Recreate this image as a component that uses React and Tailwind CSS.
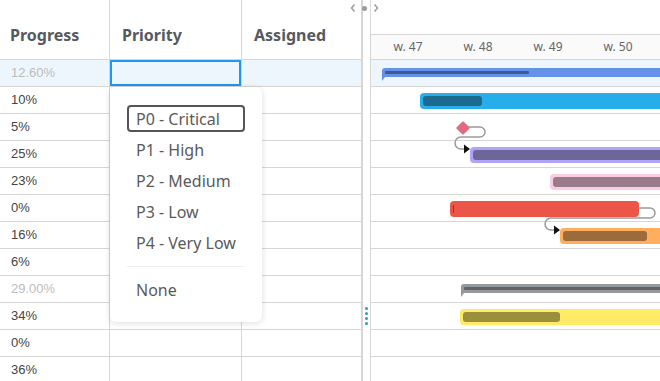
import React from 'react';

const rows = [
  { progress: '12.60%', summary: true },
  { progress: '10%' },
  { progress: '5%' },
  { progress: '25%' },
  { progress: '23%' },
  { progress: '0%' },
  { progress: '16%' },
  { progress: '6%' },
  { progress: '29.00%', summary: true },
  { progress: '34%' },
  { progress: '0%' },
  { progress: '36%' },
  { progress: '' },
];

// posição das barras em px a partir do início do gráfico
const bars = [
  { type: 'summary', left: 11, width: 400, color: '#6592e6', inner: '#3d5a98', done: 144 },
  { type: 'task', left: 49, width: 400, color: '#27aeea', inner: '#1c6a8e', done: 59 },
  { type: 'milestone', left: 87 },
  { type: 'task', left: 99, width: 400, color: '#b1a2fa', inner: '#6d6698', done: 400 },
  { type: 'task', left: 179, width: 400, color: '#fbcde5', inner: '#9a7b89', done: 400 },
  { type: 'task', left: 79, width: 189, color: '#eb5649', inner: '#a8322a', done: 0 },
  { type: 'task', left: 189, width: 400, color: '#feae5d', inner: '#9b6b3b', done: 84 },
  null,
  { type: 'summary', left: 90, width: 400, color: '#93999d', inner: '#5f6468', done: 400 },
  { type: 'task', left: 89, width: 400, color: '#ffeb66', inner: '#9b8e3c', done: 97 },
  null,
  null,
  null,
];

const prioridades = ['P0 - Critical', 'P1 - High', 'P2 - Medium', 'P3 - Low', 'P4 - Very Low'];
const semanas = ['w. 47', 'w. 48', 'w. 49', 'w. 50'];

const Bar = ({ bar }) => {
  if (!bar) return null;
  if (bar.type === 'milestone') {
    return (
      <div className="absolute top-[9px] left-[87px] w-[10px] h-[10px] rotate-45 rounded-[1px] bg-[#e06b80]"></div>
    );
  }
  if (bar.type === 'summary') {
    return (
      <div className="absolute top-[8px]" style={{ left: bar.left, width: bar.width }}>
        <div className="relative h-[9px] rounded-tl-[3px]" style={{ background: bar.color }}>
          <div
            className="absolute top-[3px] left-[3px] h-[3px] rounded-[1px]"
            style={{ width: bar.done, background: bar.inner }}
          ></div>
        </div>
        <div
          className="w-[3px] h-[4px] [clip-path:polygon(0_0,100%_0,0_100%)]"
          style={{ background: bar.color }}
        ></div>
      </div>
    );
  }
  return (
    <div
      className="absolute top-[6px] h-[16px] rounded-[4px]"
      style={{ left: bar.left, width: bar.width, background: bar.color }}
    >
      {bar.done > 0 ? (
        <div
          className="absolute top-[3px] bottom-[3px] left-[3px] rounded-[3px]"
          style={{ width: Math.min(bar.done, bar.width - 6), background: bar.inner }}
        ></div>
      ) : (
        <div className="absolute top-[4px] left-[3px] w-[1px] h-[8px] bg-[#9c2f27]"></div>
      )}
    </div>
  );
};

const App = () => {
  return (
    <div className="relative w-[660px] h-[381px] overflow-hidden bg-white flex font-['Noto_Sans',sans-serif] text-[#555]">
      {/* Grade */}
      <div className="relative w-[362px] shrink-0">
        <div className="flex h-[60px] border-b border-[#d6d6d6] text-[16px] font-bold text-[#555a60]">
          <div className="w-[110px] border-r border-[#d6d6d6] flex items-center pt-[11px] pl-[10px]">Progress</div>
          <div className="w-[132px] border-r border-[#d6d6d6] flex items-center pt-[11px] pl-[12px]">Priority</div>
          <div className="w-[120px] border-r border-[#d6d6d6] flex items-center pt-[11px] pl-[12px]">Assigned</div>
        </div>
        {rows.map((row, i) => (
          <div
            key={i}
            className={`flex h-[27px] border-b border-[#d6d6d6] ${i === 0 ? 'bg-[#eef6fd]' : ''}`}
          >
            <div
              className={`w-[110px] border-r border-[#d6d6d6] flex items-center pl-[11px] font-['Liberation_Sans',sans-serif] text-[13px] ${row.summary ? 'text-[#bcbcbc]' : 'text-[#444]'}`}
            >
              {row.progress}
            </div>
            <div className="relative w-[132px] border-r border-[#d6d6d6]">
              {i === 0 && <div className="absolute inset-0 border-2 border-[#2196f3]"></div>}
            </div>
            <div className="w-[120px] border-r border-[#d6d6d6]"></div>
          </div>
        ))}

        {/* Menu de prioridade */}
        <div className="absolute left-[110px] top-[87px] w-[152px] h-[235px] bg-white rounded-[6px] shadow-[0_1px_6px_rgba(0,0,0,0.14)] px-[17px] pt-[18px] text-[16px] text-[#5a5a5a]">
          <div className="flex flex-col gap-[4px]">
            {prioridades.map((p, i) => (
              <div
                key={p}
                className={`h-[27px] flex items-center pl-[7px] rounded-[4px] border-2 ${i === 0 ? 'border-[#555]' : 'border-transparent'}`}
              >
                {p}
              </div>
            ))}
          </div>
          <div className="mt-[10px] border-t border-[#eeeeee]"></div>
          <div className="mt-[9px] h-[27px] flex items-center pl-[9px]">None</div>
        </div>
      </div>

      {/* Divisor */}
      <div className="relative w-[8px] shrink-0 border-l border-[#d6d6d6]">
        <div className="absolute left-[2px] top-[307px] flex flex-col gap-[2px]">
          <div className="w-[3px] h-[3px] rounded-full bg-[#2a9db4]"></div>
          <div className="w-[3px] h-[3px] rounded-full bg-[#2a9db4]"></div>
          <div className="w-[3px] h-[3px] rounded-full bg-[#2a9db4]"></div>
          <div className="w-[3px] h-[3px] rounded-full bg-[#2a9db4]"></div>
        </div>
      </div>
      <div className="absolute left-[350px] top-[3px] flex items-center gap-[4px] text-[#9a9a9a]">
        <svg width="6" height="10" viewBox="0 0 6 10">
          <path d="M4.5 1.5 L1.5 5 L4.5 8.5" fill="none" stroke="currentColor" strokeWidth="1.4" />
        </svg>
        <div className="w-[5px] h-[5px] rounded-full bg-[#9a9a9a] mx-[2px]"></div>
        <svg width="6" height="10" viewBox="0 0 6 10">
          <path d="M1.5 1.5 L4.5 5 L1.5 8.5" fill="none" stroke="currentColor" strokeWidth="1.4" />
        </svg>
      </div>

      {/* Gráfico */}
      <div className="relative flex-1 border-l border-[#d6d6d6]">
        <div className="h-[35px] border-b border-[#d6d6d6]"></div>
        <div className="h-[25px] border-b border-[#d6d6d6] bg-[#fafafa] flex pl-[2px] text-[12px] text-[#666]">
          {semanas.map((s) => (
            <div key={s} className="w-[70px] shrink-0 flex items-center justify-center">
              {s}
            </div>
          ))}
        </div>
        <div className="relative">
          {rows.map((row, i) => (
            <div
              key={i}
              className={`relative h-[27px] border-b border-[#d6d6d6] ${i === 0 ? 'bg-[#eef6fd]' : ''}`}
            >
              <Bar bar={bars[i]} />
            </div>
          ))}
          {/* Dependências */}
          <svg className="absolute left-0 top-0" width="300" height="330">
            <g fill="none" stroke="#9a9a9a" strokeWidth="1.5">
              <path d="M97 67 H109 A5 5 0 0 1 109 77 H90 A6 6 0 0 0 90 89 H94" />
              <path d="M268 148 H279 A5 5 0 0 1 279 158 H180 A6 6 0 0 0 180 170 H184" />
            </g>
            <polygon points="99,89 93,84.5 93,93.5" fill="#111" />
            <polygon points="189,170 183,165.5 183,174.5" fill="#111" />
          </svg>
        </div>
      </div>
    </div>
  );
};

export default App;
